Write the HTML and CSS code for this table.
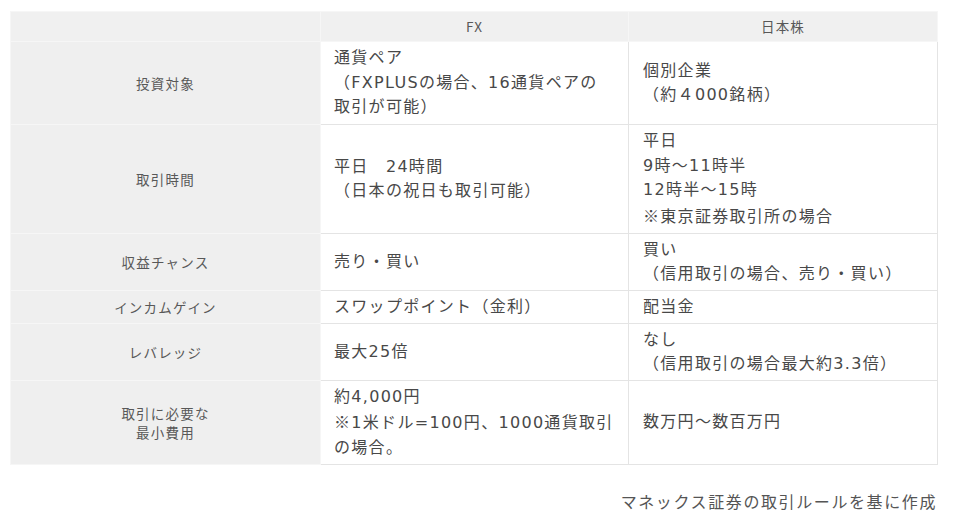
FILE: index.html
```html
<!doctype html>
<html lang="ja">
<head>
<meta charset="utf-8">
<title>FXと日本株の比較</title>
<link rel="stylesheet" href="styles.css">
</head>
<body>
	<div class="wrap">
		<table class="compare">
			<colgroup>
				<col class="c-label">
				<col class="c-fx">
				<col class="c-stock">
			</colgroup>
			<tr class="r-head">
				<th></th>
				<th>FX</th>
				<th>日本株</th>
			</tr>
			<tr class="r-3">
				<th>投資対象</th>
				<td>通貨ペア<br>（FXPLUSの場合、16通貨ペアの<br>取引が可能）</td>
				<td>個別企業<br>（約４000銘柄）</td>
			</tr>
			<tr class="r-4">
				<th>取引時間</th>
				<td>平日　24時間<br>（日本の祝日も取引可能）</td>
				<td>平日<br>9時～11時半<br>12時半～15時<br><span class="mark">※</span>東京証券取引所の場合</td>
			</tr>
			<tr class="r-2">
				<th>収益チャンス</th>
				<td>売り・買い</td>
				<td>買い<br>（信用取引の場合、売り・買い）</td>
			</tr>
			<tr class="r-1">
				<th>インカムゲイン</th>
				<td>スワップポイント（金利）</td>
				<td>配当金</td>
			</tr>
			<tr class="r-2">
				<th>レバレッジ</th>
				<td>最大25倍</td>
				<td>なし<br>（信用取引の場合最大約3.3倍）</td>
			</tr>
			<tr class="r-last">
				<th>取引に必要な<br>最小費用</th>
				<td>約4,000円<br><span class="mark">※</span>1米ドル=100円、1000通貨取引<br>の場合。</td>
				<td>数万円～数百万円</td>
			</tr>
		</table>
		<p class="source">マネックス証券の取引ルールを基に作成</p>
	</div>
</body>
</html>
```

FILE: styles.css
```css
body {
	margin: 0;
	background-color: #ffffff;
	font-family: "Noto Sans CJK JP", "Noto Sans", sans-serif;
}

.wrap {width: 927px; padding: 11px 0 0 10px;}

.compare {width: 927px; border-collapse: collapse; table-layout: fixed;}
.compare .c-label {width: 310px;}
.compare .c-fx {width: 308px;}
.compare .c-stock {width: 309px;}

.compare th {background-color: #efefef; border: 1px solid #f6f6f6; font-size: 13.5px; font-weight: normal; letter-spacing: 1.2px; line-height: 19px; color: #585858; text-align: center; vertical-align: middle; padding: 0 10px;}
.compare td {background-color: #ffffff; border: 1px solid #e4e4e4; font-family: "DejaVu Sans", "Noto Sans CJK JP", sans-serif; font-size: 16px; letter-spacing: 1.3px; line-height: 24.5px; color: #484848; text-align: left; vertical-align: middle; white-space: nowrap; padding: 0 6px 0 13px;}
.compare td:last-child {padding-left: 14px;}
.compare td .mark {font-family: "Noto Sans CJK JP", sans-serif;}

.compare .r-head {height: 30px;}
.compare .r-head th {background-color: #f0f0f0;}
.compare .r-3 {height: 83px;}
.compare .r-4 {height: 109px;}
.compare .r-2 {height: 57px;}
.compare .r-1 {height: 33px;}
.compare .r-last {height: 84px;}

.source {margin: 24px 0 0 0; font-size: 16px; letter-spacing: 1.6px; line-height: 24px; color: #555555; text-align: right;}
```
